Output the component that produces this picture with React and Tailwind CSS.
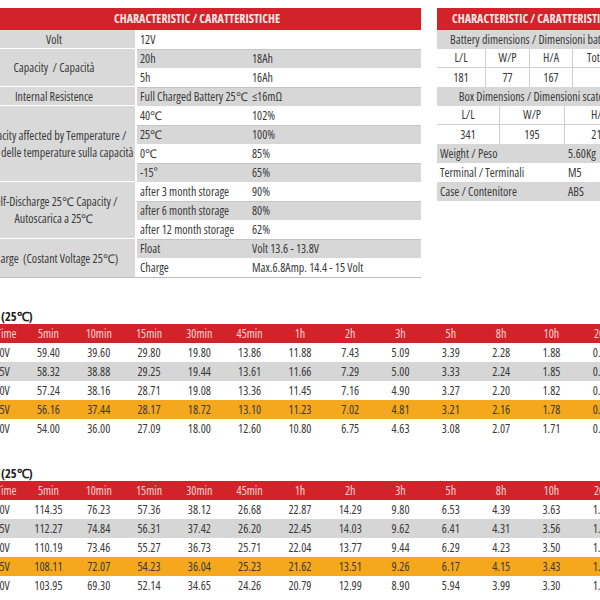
import React from "react";

function TopLeft() {
  const lab = "bg-[#d9d9d9] border-r-2 border-b border-white flex items-center justify-center text-center leading-[17px] whitespace-nowrap";
  const sub = "pl-[3px] flex items-center whitespace-nowrap";
  const val = "pl-[2px] flex items-center whitespace-nowrap";
  const g = "bg-[#d7d7d7] border-t border-[#c4c4c4]";
  return (
    <div className="w-[448px] shrink-0">
      <div className="h-[22px] bg-[#d2232a] text-[#fde6e6] font-bold text-[12px] flex items-center justify-center">
        CHARACTERISTIC / CARATTERISTICHE
      </div>
      <div className="grid grid-cols-[164px_113px_171px] auto-rows-[19px] border-b border-[#bdbdbd]">
        <div className={lab}>Volt</div>
        <div className={`${sub} col-span-2`}>12V</div>

        <div className={`${lab} row-span-2`}>Capacity&nbsp; / Capacità</div>
        <div className={`${sub} ${g}`}>20h</div>
        <div className={`${val} ${g}`}>18Ah</div>
        <div className={sub}>5h</div>
        <div className={val}>16Ah</div>

        <div className={lab}>Internal Resistence</div>
        <div className={`${sub} ${g}`}>Full Charged Battery 25℃</div>
        <div className={`${val} ${g}`}>≤16mΩ</div>

        <div className={`${lab} row-span-4`}>
          Capacity affected by Temperature /<br />Effetti delle temperature sulla capacità
        </div>
        <div className={sub}>40℃</div>
        <div className={val}>102%</div>
        <div className={`${sub} ${g}`}>25℃</div>
        <div className={`${val} ${g}`}>100%</div>
        <div className={sub}>0℃</div>
        <div className={val}>85%</div>
        <div className={`${sub} ${g}`}>-15°</div>
        <div className={`${val} ${g}`}>65%</div>

        <div className={`${lab} row-span-3`}>
          Self-Discharge 25℃ Capacity /<br />Autoscarica a 25℃
        </div>
        <div className={sub}>after 3 month storage</div>
        <div className={val}>90%</div>
        <div className={`${sub} ${g}`}>after 6 month storage</div>
        <div className={`${val} ${g}`}>80%</div>
        <div className={sub}>after 12 month storage</div>
        <div className={val}>62%</div>

        <div className={`${lab} row-span-2 border-b-0`}>Charge&nbsp; (Costant Voltage 25℃)</div>
        <div className={`${sub} ${g}`}>Float</div>
        <div className={`${val} ${g}`}>Volt 13.6 - 13.8V</div>
        <div className={sub}>Charge</div>
        <div className={val}>Max.6.8Amp. 14.4 - 15 Volt</div>
      </div>
    </div>
  );
}

function TopRight() {
  const cell = "flex items-center justify-center border-r border-[#cfcfcf] whitespace-nowrap";
  const band = "h-[19px] bg-[#d7d7d7] flex items-center justify-center whitespace-nowrap";
  return (
    <div className="w-[196px] shrink-0">
      <div className="h-[22px] bg-[#d2232a] text-[#fde6e6] font-bold text-[12px] flex items-center justify-center whitespace-nowrap">
        CHARACTERISTIC / CARATTERISTICHE
      </div>
      <div className={band}>Battery dimensions / Dimensioni batteria</div>
      <div className="grid grid-cols-[49px_44px_43px_60px] auto-rows-[19px]">
        <div className={`${cell} border-b`}>L/L</div>
        <div className={`${cell} border-b`}>W/P</div>
        <div className={`${cell} border-b`}>H/A</div>
        <div className="flex items-center pl-[14px] border-b border-[#cfcfcf] whitespace-nowrap">Tot H/A</div>
        <div className={cell}>181</div>
        <div className={cell}>77</div>
        <div className={cell}>167</div>
        <div className={`${cell} border-r-0`}></div>
      </div>
      <div className={band}>Box Dimensions / Dimensioni scatola</div>
      <div className="grid grid-cols-[63px_65px_68px] auto-rows-[19px]">
        <div className={`${cell} border-b`}>L/L</div>
        <div className={`${cell} border-b`}>W/P</div>
        <div className={`${cell} border-b border-r-0`}>H/A</div>
        <div className={cell}>341</div>
        <div className={cell}>195</div>
        <div className={`${cell} border-r-0`}>210</div>
      </div>
      <div className="h-[19px] bg-[#d7d7d7] flex items-center">
        <div className="w-[131px] pl-[3px]">Weight / Peso</div>
        <div>5.60Kg</div>
      </div>
      <div className="h-[19px] flex items-center">
        <div className="w-[131px] pl-[3px]">Terminal / Terminali</div>
        <div>M5</div>
      </div>
      <div className="h-[19px] bg-[#d7d7d7] flex items-center">
        <div className="w-[131px] pl-[3px]">Case / Contenitore</div>
        <div>ABS</div>
      </div>
    </div>
  );
}

const HEADS = ["F.V/Time", "5min", "10min", "15min", "30min", "45min", "1h", "2h", "3h", "5h", "8h", "10h", "20h"];
const VOLTS = ["1.60V", "1.65V", "1.70V", "1.75V", "1.80V"];
const ROW_BG = ["bg-white", "bg-[#d6d6d6]", "bg-white", "bg-[#f6a81d]", "bg-white"];

const T1 = [
  ["59.40", "39.60", "29.80", "19.80", "13.86", "11.88", "7.43", "5.09", "3.39", "2.28", "1.88", "0.99"],
  ["58.32", "38.88", "29.25", "19.44", "13.61", "11.66", "7.29", "5.00", "3.33", "2.24", "1.85", "0.97"],
  ["57.24", "38.16", "28.71", "19.08", "13.36", "11.45", "7.16", "4.90", "3.27", "2.20", "1.82", "0.95"],
  ["56.16", "37.44", "28.17", "18.72", "13.10", "11.23", "7.02", "4.81", "3.21", "2.16", "1.78", "0.93"],
  ["54.00", "36.00", "27.09", "18.00", "12.60", "10.80", "6.75", "4.63", "3.08", "2.07", "1.71", "0.90"],
];
const T2 = [
  ["114.35", "76.23", "57.36", "38.12", "26.68", "22.87", "14.29", "9.80", "6.53", "4.39", "3.63", "1.91"],
  ["112.27", "74.84", "56.31", "37.42", "26.20", "22.45", "14.03", "9.62", "6.41", "4.31", "3.56", "1.87"],
  ["110.19", "73.46", "55.27", "36.73", "25.71", "22.04", "13.77", "9.44", "6.29", "4.23", "3.50", "1.84"],
  ["108.11", "72.07", "54.23", "36.04", "25.23", "21.62", "13.51", "9.26", "6.17", "4.15", "3.43", "1.80"],
  ["103.95", "69.30", "52.14", "34.65", "24.26", "20.79", "12.99", "8.90", "5.94", "3.99", "3.30", "1.73"],
];

function DataTable({ rows }) {
  return (
    <div className="-ml-[27px] w-[654px]">
      <div className="grid grid-cols-[repeat(13,50.3px)] h-[19px] bg-[#d2232a] text-[#fbd3d3] items-center text-center whitespace-nowrap">
        {HEADS.map((h) => (
          <div key={h}>{h}</div>
        ))}
      </div>
      {rows.map((r, i) => (
        <div
          key={i}
          className={`grid grid-cols-[repeat(13,50.3px)] h-[19px] items-center text-center whitespace-nowrap ${ROW_BG[i]}`}
        >
          <div>{VOLTS[i]}</div>
          {r.map((v, j) => (
            <div key={j}>{v}</div>
          ))}
        </div>
      ))}
    </div>
  );
}

export default function App() {
  return (
    <div className="w-[600px] h-[600px] overflow-hidden bg-white text-[#3a3a3a] text-[12px] font-['Open_Sans',sans-serif] [font-stretch:75%]">
      <div className="flex gap-[16px] -ml-[27px] pt-[8px]">
        <TopLeft />
        <TopRight />
      </div>
      <div className="mt-[31px] h-[15px] leading-[15px] pl-[1px] font-bold text-[12.5px] text-[#222]">(25℃)</div>
      <DataTable rows={T1} />
      <div className="mt-[28px] h-[15px] leading-[15px] pl-[1px] font-bold text-[12.5px] text-[#222]">(25℃)</div>
      <DataTable rows={T2} />
    </div>
  );
}
